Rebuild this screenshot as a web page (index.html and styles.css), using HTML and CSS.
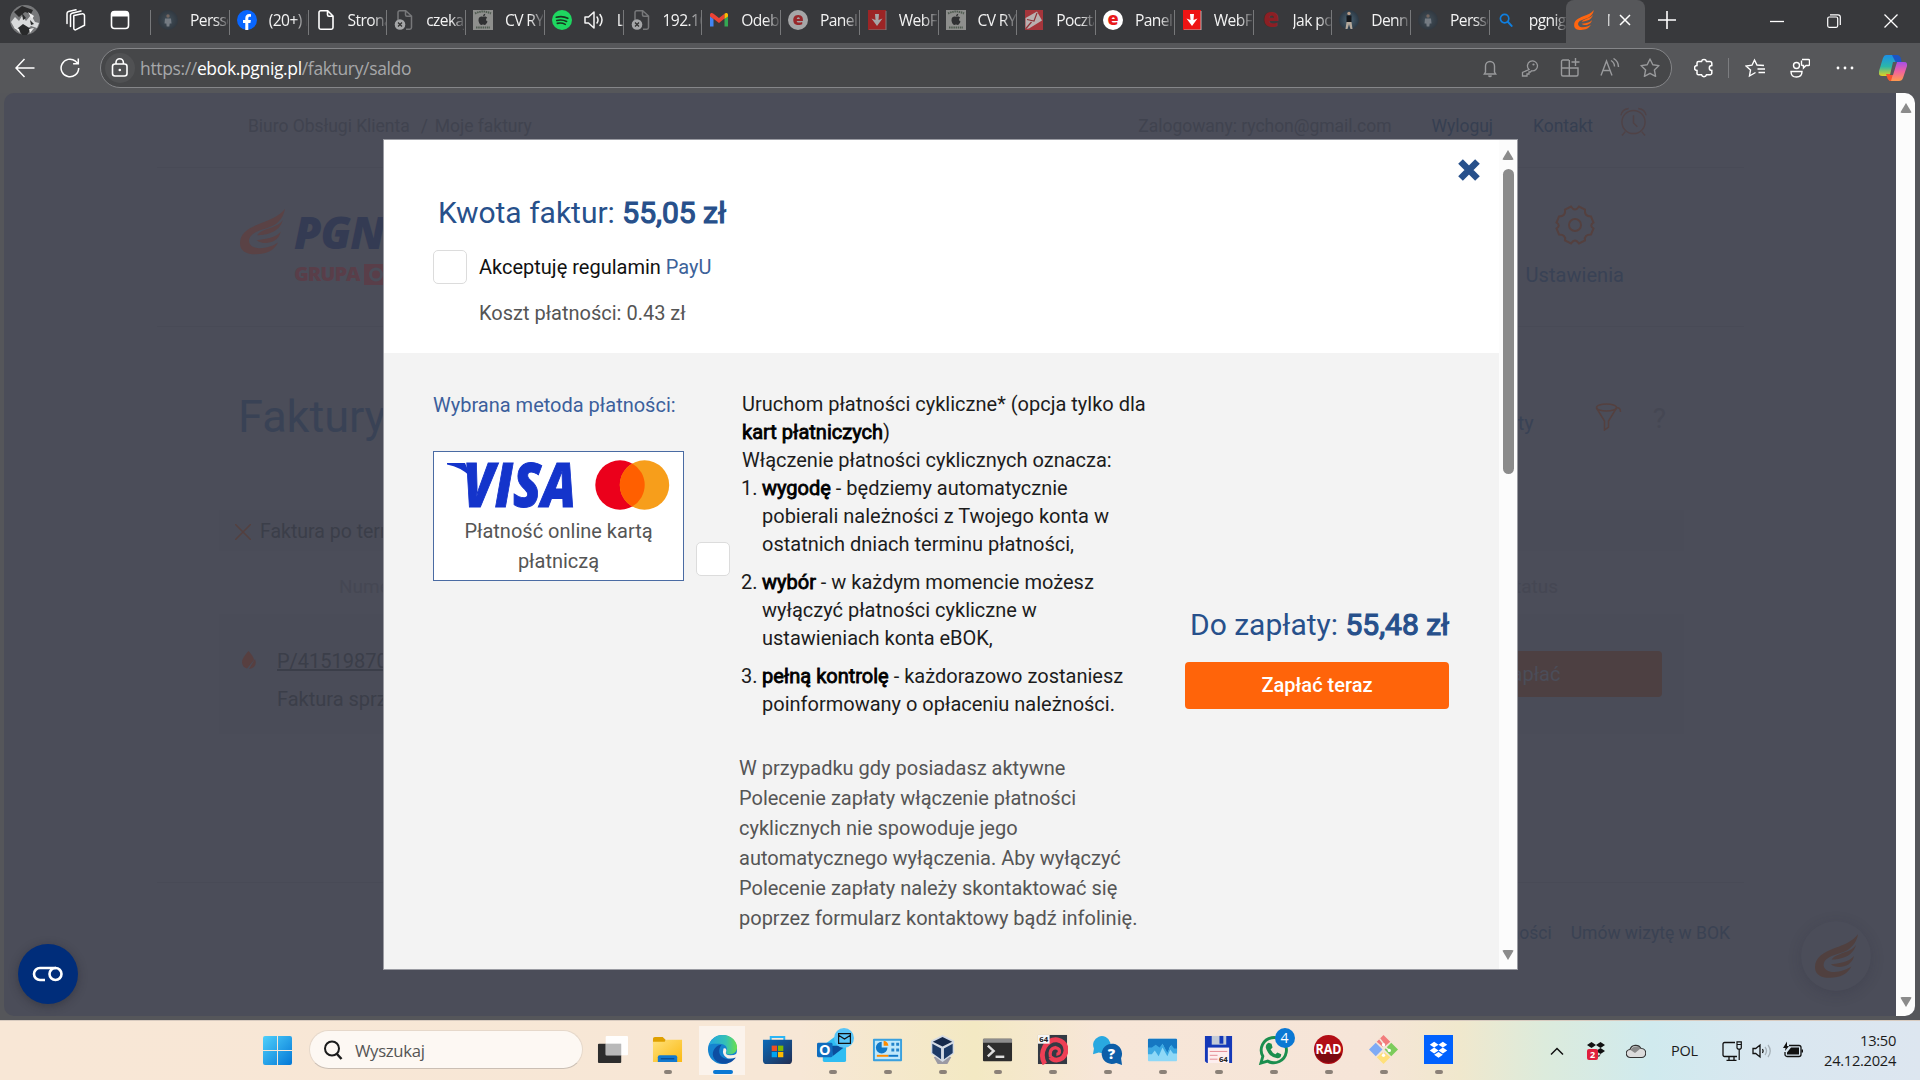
FILE: index.html
```html
<!DOCTYPE html>
<html lang="pl">
<head>
<meta charset="utf-8">
<title>Moje faktury</title>
<link rel="stylesheet" href="styles.css">
</head>
<body>
<svg class="sprite" aria-hidden="true">
  <defs>
    <linearGradient id="gWin" x1="0" y1="0" x2="1" y2="1"><stop offset="0" stop-color="#4fd0fb"/><stop offset="1" stop-color="#0377d6"/></linearGradient>
    <linearGradient id="gFold" x1="0" y1="0" x2="1" y2="1"><stop offset="0" stop-color="#ffe17a"/><stop offset="1" stop-color="#fbb912"/></linearGradient>
    <linearGradient id="gEdge" x1="0" y1="0" x2="1" y2="0"><stop offset="0" stop-color="#23a6e0"/><stop offset=".6" stop-color="#35c1b5"/><stop offset="1" stop-color="#6be04a"/></linearGradient>
    <linearGradient id="gStore" x1="0" y1="0" x2="1" y2="1"><stop offset="0" stop-color="#0a6ab9"/><stop offset="1" stop-color="#222e52"/></linearGradient>
    <linearGradient id="gCo1" x1="0" y1="0" x2="0" y2="1"><stop offset="0" stop-color="#1b8fe8"/><stop offset=".55" stop-color="#2bb7a8"/><stop offset="1" stop-color="#e3d21f"/></linearGradient>
    <linearGradient id="gCo2" x1="0" y1="0" x2="0" y2="1"><stop offset="0" stop-color="#a44fe8"/><stop offset=".5" stop-color="#f0629f"/><stop offset="1" stop-color="#ff9a4d"/></linearGradient>
    <radialGradient id="gDark"><stop offset="0" stop-color="#4c6474"/><stop offset="1" stop-color="#2b3844"/></radialGradient>
  </defs>
  <symbol id="flame" viewBox="0 0 130 132"><path d="M130 0C112 22 92 30 60 42C25 56 0 70 0 100C0 122 18 132 45 132C75 132 98 122 110 98C95 108 70 117 50 114C26 110 20 92 32 78C45 63 75 60 96 49C115 38 127 20 130 0Z"/><path d="M124 32C114 48 98 52 78 59C62 65 54 70 50 77C75 76 114 70 124 32Z"/><path d="M118 66C106 80 90 86 48 91C66 106 110 102 118 66Z"/></symbol>
  <symbol id="doc" viewBox="0 0 20 20"><path d="M4.700.8h7L17 6v11.500a1.700 1.700 0 0 1-1.700 1.700H4.700A1.700 1.700 0 0 1 3 17.500V2.500A1.700 1.700 0 0 1 4.700.8zM11.500 1v3.700A1.500 1.500 0 0 0 13 6.200h4" fill="none" stroke="#fff" stroke-width="1.600"/></symbol>
  <symbol id="docx" viewBox="0 0 20 20"><path d="M4 10V2.500A1.700 1.700 0 0 1 5.700.8h6L17.500 6v11.500a1.700 1.700 0 0 1-1.700 1.700H12M11.500 1v3.700A1.500 1.500 0 0 0 13 6.200h4" fill="none" stroke="#77787a" stroke-width="1.500"/><circle cx="6" cy="14.500" r="5.300" fill="#a5a6a8"/><path d="M4 12.500l4 4M8 12.500l-4 4" stroke="#333" stroke-width="1.300"/></symbol>
  <symbol id="person" viewBox="0 0 20 20"><circle cx="10" cy="10" r="10" fill="url(#gDark)"/><circle cx="10" cy="6" r="1.700" fill="#a58d80"/><path d="M7 8.500h6l.5 5h-1.800l-.4 3h-2.600l-.4-3H6.500z" fill="#a5b1bd"/></symbol>
  <symbol id="person2" viewBox="0 0 20 20"><circle cx="10" cy="10" r="10" fill="url(#gDark)"/><circle cx="10" cy="3.500" r="1.700" fill="#b59a86"/><path d="M7.500 5.500h5v7h-5z" fill="#15181c"/><path d="M7.500 12h5l1 7h-2l-1.500-5-1.500 5h-2z" fill="#b4a99c"/></symbol>
  <symbol id="fb" viewBox="0 0 20 20"><circle cx="10" cy="10" r="10" fill="#0866ff"/><path d="M8.300 20v-7H6v-3h2.300V8.300C8.300 5.600 9.600 4 12.300 4c.8 0 1.300.1 1.700.2v2.500h-1.300c-1.100 0-1.400.6-1.400 1.600V10h2.600l-.5 3h-2.100v7z" fill="#fff"/></symbol>
  <symbol id="apple" viewBox="0 0 20 20"><path d="M0 0h20v20H0z" fill="#8e8f8d"/><path d="M2 3.500Q10-.5 18 3.500M3 17.500h14" stroke="#4f5b50" stroke-width="2" stroke-dasharray="1.500 .7" fill="none"/><path d="M10 7c-1-.8-4.500-.8-4.500 3 0 2.500 1.700 5 3 5 .7 0 .8-.4 1.500-.4s.8.400 1.500.4c1.200 0 2.500-2 3-3.500-2-.8-1.800-3-.3-3.800C13 6.200 11 6.300 10 7zM10 6.500c0-1.500 1-2.700 2.300-2.800 0 1.500-1 2.700-2.300 2.800z" fill="#303133"/></symbol>
  <symbol id="spot" viewBox="0 0 20 20"><circle cx="10" cy="10" r="10" fill="#1ed760"/><path d="M4.300 7.300c4-1.200 8-.8 11.500 1M4.800 10.500c3.500-1 6.700-.6 9.800 1M5.300 13.400c2.800-.7 5.500-.4 8 1" fill="none" stroke="#17351f" stroke-width="1.600" stroke-linecap="round"/></symbol>
  <symbol id="spk" viewBox="0 0 20 20"><path d="M1 7h3.500L10 2v16l-5.500-5H1zM13 7q2 3 0 6M16 4.500q4 5.500 0 11" fill="none" stroke="currentColor" stroke-width="1.500" stroke-linejoin="round" stroke-linecap="round"/></symbol>
  <symbol id="gmail" viewBox="0 0 20 20"><path d="M1 6v10.500h3.500V9z" fill="#4285f4"/><path d="M19 6v10.500h-3.500V9z" fill="#34a853"/><path d="M1 6.500V5c0-2 2-2.500 3.500-1.300L10 8l5.500-4.300V8.500L10 13 4.500 8.700V9z" fill="#ea4335"/><path d="M15.500 9V3.700C17 2.500 19 3 19 5v1.500z" fill="#fbbc04"/></symbol>
  <symbol id="ebadge" viewBox="0 0 20 20"><circle cx="10" cy="10" r="10" fill="#fff"/><text x="10" y="15.300" text-anchor="middle" font-family="Open Sans, sans-serif" font-weight="800" font-size="18" fill="#e8191c">e</text></symbol>
  <symbol id="dl" viewBox="0 0 20 20"><path d="M1 0h18v20H1z" fill="#ee1414"/><path d="M19 1v19H2" fill="none" stroke="#b7b0b0" stroke-width="1"/><path d="M8 4h4l-.5 6 4-1.500L10 16 4.500 8.500l4 1.500z" fill="#fff"/></symbol>
  <symbol id="mail" viewBox="0 0 20 20"><path d="M1 0h18v20H1z" fill="#a5353b"/><path d="M1.500 8L13 1.500l5 9L5 18.500 1.500 19z" fill="#b9b0b0"/><path d="M3 9.500l7 1.500 3-8M1.500 19l6-7" fill="none" stroke="#8d3036" stroke-width="1.200"/></symbol>
  <symbol id="mag" viewBox="0 0 20 20"><circle cx="8" cy="8" r="6" fill="none" stroke="currentColor" stroke-width="2.400"/><path d="M12.500 12.500l5.500 6" stroke="currentColor" stroke-width="2.800" stroke-linecap="round"/></symbol>
</svg>

<header class="tabs">
  <div class="tools">
    <svg class="avatar" viewBox="0 0 30 30"><circle cx="15" cy="15" r="15" fill="#77787a"/><path d="M4 7l8-6 11 4-2 4-6-2-6 5z" fill="#2a2a2b"/><path d="M1 17l4-5 4 4 3-5 4 5 5-6 4 7 4 1-2 5-6-2-5 4-5-3-6 2z" fill="#d9dadb"/><path d="M8 23l5-4 8 5-4 6h-5zM12 8l4 5-3 2zM20 15l4 4-3 1z" fill="#292a2b"/><path d="M18 7l6 4-2 3zM4 22l5 2 1 4zM19 24l5-1-4 5z" fill="#eee"/></svg>
    <svg class="t-work" viewBox="0 0 22 22"><path d="M10 6.500l8-1.800a2 2 0 0 1 2.500 2v9.500l-8.500 4.500a1.500 1.500 0 0 1-2.200-1.300V8a1.700 1.700 0 0 1 .2-1.500zM6.500 17.500V6.200a2 2 0 0 1 1.500-2l9-2.200M3 14.500V4.500a2 2 0 0 1 1.500-2L12 .8" fill="none" stroke="#fff" stroke-width="1.500" stroke-linecap="round"/></svg>
    <svg class="t-side" viewBox="0 0 20 20"><rect x="1.500" y="1.500" width="17" height="17" rx="3" fill="none" stroke="#fff" stroke-width="1.600"/><path d="M1.500 6.500V4a3 3 0 0 1 3-3h11a3 3 0 0 1 3 3v2.500z" fill="#fff"/></svg>
  </div>
  <div class="tab"><svg class="dim"><use href="#person"/></svg><span>Persson</span></div>
  <div class="tab"><svg><use href="#fb"/></svg><span>(20+) F</span></div>
  <div class="tab"><svg><use href="#doc"/></svg><span>Strona</span></div>
  <div class="tab"><svg><use href="#docx"/></svg><span>czekaj</span></div>
  <div class="tab"><svg><use href="#apple"/></svg><span>CV RYS</span></div>
  <div class="tab"><svg><use href="#spot"/></svg><svg class="snd"><use href="#spk"/></svg><span class="after-snd">Li</span></div>
  <div class="tab"><svg><use href="#docx"/></svg><span>192.16</span></div>
  <div class="tab"><svg><use href="#gmail"/></svg><span>Odebr</span></div>
  <div class="tab"><svg class="dim"><use href="#ebadge"/></svg><span>Panel k</span></div>
  <div class="tab"><svg class="dim"><use href="#dl"/></svg><span>WebFT</span></div>
  <div class="tab"><svg><use href="#apple"/></svg><span>CV RYS</span></div>
  <div class="tab"><svg><use href="#mail"/></svg><span>Poczta</span></div>
  <div class="tab"><svg><use href="#ebadge"/></svg><span>Panel k</span></div>
  <div class="tab"><svg><use href="#dl"/></svg><span>WebFT</span></div>
  <div class="tab"><svg viewBox="0 0 20 20"><text x="10" y="17" text-anchor="middle" font-family="Open Sans, sans-serif" font-weight="800" font-size="26" fill="#8c1f24">e</text></svg><span>Jak pob</span></div>
  <div class="tab"><svg><use href="#person2"/></svg><span>Dennis</span></div>
  <div class="tab"><svg class="dim"><use href="#person"/></svg><span>Persson</span></div>
  <div class="tab last"><svg class="bing"><use href="#mag"/></svg><span>pgnig e</span></div>
  <div class="tab active"><svg class="brand"><use href="#flame"/></svg><span>M</span><svg class="x" viewBox="0 0 12 12"><path d="M1 1l10 10M11 1L1 11" stroke="#fff" stroke-width="1.500"/></svg></div>
  <svg class="plus" viewBox="0 0 18 18"><path d="M9 0v18M0 9h18" stroke="#fff" stroke-width="1.600"/></svg>
  <div class="win">
    <svg viewBox="0 0 14 14"><path d="M0 7.500h14" stroke="#fff" stroke-width="1.300"/></svg>
    <svg viewBox="0 0 14 14"><rect x=".7" y="3" width="10" height="10.300" rx="1.500" fill="none" stroke="#fff" stroke-width="1.200"/><path d="M3 .8h8a2.300 2.300 0 0 1 2.300 2.300v8" fill="none" stroke="#fff" stroke-width="1.200"/></svg>
    <svg viewBox="0 0 14 14"><path d="M.5.500l13 13M13.500.5l-13 13" stroke="#fff" stroke-width="1.300"/></svg>
  </div>
</header>

<nav class="bar">
  <svg class="back" viewBox="0 0 20 20"><path d="M19.500 10H1M9.500 1L1 10l8.500 9" fill="none" stroke="#fff" stroke-width="1.500"/></svg>
  <svg class="reload" viewBox="0 0 20 20"><path d="M18.700 10A8.800 8.800 0 1 1 15.500 3.200L18 5.500M18.300.5v5.300h-5.200" fill="none" stroke="#fff" stroke-width="1.500"/></svg>
  <div class="url">
    <span class="lock"><svg viewBox="0 0 18 20"><rect x="1.500" y="6" width="14.500" height="12" rx="2.500" fill="none" stroke="#fff" stroke-width="1.600"/><path d="M5 6V4.500a3.700 3.700 0 0 1 7.400 0V6" fill="none" stroke="#fff" stroke-width="1.600"/><circle cx="8.800" cy="12" r="1.300" fill="#fff"/></svg></span>
    <span class="addr">https://<b>ebok.pgnig.pl</b>/faktury/saldo</span>
    <div class="acts">
      <svg viewBox="0 0 20 20"><path d="M5.500 14V8a4.500 4.500 0 0 1 9 0v6l1.200 2H4.300zM8.500 17.500q1.500 2 3 0" fill="none" stroke="#999a9c" stroke-width="1.400"/></svg>
      <svg viewBox="0 0 20 20"><path d="M9 11.500a5 5 0 1 1 2.500 1.300l-1 1.200H9v2H7v2H2.500v-3.500z" fill="none" stroke="#999a9c" stroke-width="1.300"/><circle cx="13.500" cy="6.500" r="1.100" fill="#999a9c"/></svg>
      <svg viewBox="0 0 20 20"><path d="M9 2H3a1.500 1.500 0 0 0-1.500 1.500v13A1.500 1.500 0 0 0 3 18h13.500a1.500 1.500 0 0 0 1.500-1.500V10H1.500M9.300 2v16M15.500 0v8M11.500 4h8" fill="none" stroke="#999a9c" stroke-width="1.400"/></svg>
      <svg viewBox="0 0 20 20"><path d="M1 17.500L6.500 3 12 17.500M3 12.500h7M11 2.500q3.500 2 3.500 6M13.500.5q5 3 5 8.500" fill="none" stroke="#999a9c" stroke-width="1.400"/></svg>
      <svg viewBox="0 0 20 20"><path d="M10 1l2.800 5.800 6.200.8-4.600 4.400 1.200 6.300L10 15.300l-5.600 3 1.200-6.300L1 7.600l6.200-.8z" fill="none" stroke="#999a9c" stroke-width="1.400" stroke-linejoin="round"/></svg>
    </div>
  </div>
  <div class="ext">
    <svg viewBox="0 0 20 20"><path d="M4.500 3.500h3a2.600 2.600 0 0 1 5 0H16a1.800 1.800 0 0 1 1.800 1.800V7.500a2.500 2.500 0 1 0 0 5V15a1.800 1.800 0 0 1-1.800 1.800h-3.500a2.600 2.600 0 0 1-5 0h-3A1.500 1.500 0 0 1 3 15v-2.500a2.500 2.500 0 0 1 0-5V5a1.500 1.500 0 0 1 1.500-1.500z" fill="none" stroke="#fff" stroke-width="1.500"/></svg>
    <i></i>
    <svg viewBox="0 0 20 20"><path d="M10.500 14.500L4.500 18l1-6L1 8l6-.8L9.500 2 12 7l7 .5M12.500 11H20M13.500 14.500H20" fill="none" stroke="#fff" stroke-width="1.400"/></svg>
    <svg viewBox="0 0 20 20"><circle cx="6.500" cy="7.500" r="3" fill="none" stroke="#fff" stroke-width="1.400"/><path d="M1 13.500h11q0 5.500-5.500 5.500T1 13.500zM12 1.500h6.500a1 1 0 0 1 1 1v4a1 1 0 0 1-1 1h-2.500l-2.500 2.500V7.500h-1a1 1 0 0 1-1-1V2.500" fill="none" stroke="#fff" stroke-width="1.400"/></svg>
    <svg class="more" viewBox="0 0 20 20"><circle cx="3" cy="10" r="1.400" fill="#fff"/><circle cx="10" cy="10" r="1.400" fill="#fff"/><circle cx="17" cy="10" r="1.400" fill="#fff"/></svg>
    <svg class="copilot" viewBox="0 0 28 28"><path d="M7 1h10q3 0 2 4l-4 14q-1 3-4 3H3q-4 0-3-5L4 4q1-3 3-3z" fill="url(#gCo1)"/><path d="M13 1h5q3 0 4 4l.500 3h-6z" fill="#1b55c4"/><path d="M18 8h7q4 0 3 4l-4 12q-1 3-4 3h-8q-3 0-2-3z" fill="url(#gCo2)"/><path d="M7 20h7l-2 7q-3 0-4-4z" fill="#f4542e"/><path d="M14 8h4l-4 13h-3z" fill="#56575a"/></svg>
  </div>
</nav>

<main class="page">
  <div class="site">
    <div class="crumbs">
      <span class="c1">Biuro Obsługi Klienta</span><span class="c2">/</span><span class="c3">Moje faktury</span>
      <span class="logged">Zalogowany: rychon@gmail.com</span><span class="navy out">Wyloguj</span><span class="navy">Kontakt</span>
      <svg class="alarm" viewBox="0 0 28 30"><circle cx="14" cy="15" r="12"/><path d="M14 8v8l4 4M1 8q1-6 8-7M27 8q-1-6-8-7M5.500 25l-3.500 4M22.500 25l3.500 4"/></svg>
    </div>
    <div class="brandrow">
      <svg class="logo"><use href="#flame"/></svg>
      <div class="name"><b>PGNiG</b><span>GRUPA<svg class="orlen" viewBox="0 0 20 21"><path d="M0 0h20v21H0z"/><circle cx="12" cy="10.500" r="5.500"/></svg></span></div>
      <div class="settings"><svg viewBox="0 0 40 40"><path d="M16 1.500q4 6 8 0l6 3q-1 7 6 7l2.500 6q-4.500 3 0 6l-2.500 6q-7 0-6 6l-6 3q-4-6-8 0l-6-3q1-6-6-6l-2.500-6q4.500-3 0-6L4 11.500q7 0 6-7z"/><circle cx="20" cy="20" r="6"/></svg>Ustawienia</div>
    </div>
    <div class="titlerow"><h1>Faktury</h1><span class="ty">Filtry i zwroty</span>
      <svg class="funnel" viewBox="0 0 26 28"><ellipse cx="11" cy="4.500" rx="10" ry="3.500"/><path d="M1 5l8 13v9l4-3v-6l8-13q4-1 4 4"/></svg><span class="q">?</span></div>
    <div class="alert"><svg viewBox="0 0 16 16"><path d="M0 0l16 16M16 0L0 16"/></svg>Faktura po terminie</div>
    <div class="thead"><span>Numer</span><span>Status</span></div>
    <div class="inv">
      <svg class="drop" viewBox="0 0 14 18"><path d="M6.500 0Q12 6 12 9L5 17.500Q0 16 0 11 0 7 6.500 0zM13 8q3 8-6 10z"/></svg>
      <div class="no"><u>P/415198700</u><span>Faktura sprzedaży</span></div>
      <div class="pay">Zapłać</div>
    </div>
    <footer><span>Polityka prywatności</span><span>Umów wizytę w BOK</span></footer>
  </div>
  <div class="vbar"><i class="up"></i><i class="dn"></i></div>
  <div class="chat"><svg><use href="#flame"/></svg></div>
  <div class="cookie"><svg viewBox="0 0 32 16"><path d="M13 14H8A6 6 0 0 1 8 2h16" fill="none" stroke="#fff" stroke-width="2.600"/><circle cx="23.500" cy="8" r="6" fill="none" stroke="#fff" stroke-width="2.600"/></svg></div>

  <section class="modal">
    <div class="content">
      <div class="head">
        <svg class="close" viewBox="0 0 20 20"><path d="M2.300 2.300l15.400 15.400M17.700 2.300L2.300 17.700" stroke="#27508b" stroke-width="6"/></svg>
        <h2>Kwota faktur: <b>55,05 zł</b></h2>
        <label><i class="cb"></i><span>Akceptuję regulamin <a>PayU</a></span></label>
        <p>Koszt płatności: 0.43 zł</p>
      </div>
      <div class="cols">
        <div class="method">
          <h3>Wybrana metoda płatności:</h3>
          <div class="card">
            <svg viewBox="0 0 226 52"><text x="17" y="48" textLength="113" lengthAdjust="spacingAndGlyphs" font-family="Open Sans, sans-serif" font-weight="800" font-style="italic" font-size="62" fill="#1434cb" stroke="#1434cb" stroke-width="1">VISA</text><path d="M1 4h18l6 14Q15 8 1 5.500z" fill="#1434cb"/><circle cx="174" cy="26" r="24.700" fill="#eb001b"/><circle cx="198.500" cy="26" r="24.700" fill="#f79e1b"/><path d="M186.250 4.550a24.700 24.700 0 0 1 0 42.900 24.700 24.700 0 0 1 0-42.900z" fill="#ff5f00"/></svg>
            Płatność online kartą<br>płatniczą
          </div>
        </div>
        <i class="cb second"></i>
        <div class="cyclic">
          <div>Uruchom płatności cykliczne* (opcja tylko dla<br><b>kart płatniczych</b>)<br>Włączenie płatności cyklicznych oznacza:</div>
          <ol>
            <li><b>wygodę</b> - będziemy automatycznie<br>pobierali należności z Twojego konta w<br>ostatnich dniach terminu płatności,</li>
            <li><b>wybór</b> - w każdym momencie możesz<br>wyłączyć płatności cykliczne w<br>ustawieniach konta eBOK,</li>
            <li><b>pełną kontrolę</b> - każdorazowo zostaniesz<br>poinformowany o opłaceniu należności.</li>
          </ol>
          <p>W przypadku gdy posiadasz aktywne<br>Polecenie zapłaty włączenie płatności<br>cyklicznych nie spowoduje jego<br>automatycznego wyłączenia. Aby wyłączyć<br>Polecenie zapłaty należy skontaktować się<br>poprzez formularz kontaktowy bądź infolinię.</p>
        </div>
        <div class="total"><h2>Do zapłaty: <b>55,48 zł</b></h2><button>Zapłać teraz</button></div>
      </div>
    </div>
    <div class="mbar"><i class="up"></i><i class="thumb"></i><i class="dn"></i></div>
  </section>
</main>

<footer class="task">
  <svg class="start" viewBox="0 0 29 29"><path d="M0 2a2 2 0 0 1 2-2h12v14H0zM15 0h12a2 2 0 0 1 2 2v12H15zM0 15h14v14H2a2 2 0 0 1-2-2zM15 15h14v12a2 2 0 0 1-2 2H15z" fill="url(#gWin)"/></svg>
  <div class="search"><svg viewBox="0 0 20 20"><circle cx="9" cy="8.500" r="7" fill="none" stroke="#1b1b1b" stroke-width="2"/><path d="M13.500 13.500l5 5.500" stroke="#1b1b1b" stroke-width="2.500"/></svg>Wyszukaj</div>
  <div class="apps">
    <div class="app nodot"><svg viewBox="0 0 32 32"><rect x="1" y="10" width="24" height="20" rx="1" fill="#2d2d2d"/><rect x="9" y="2" width="23" height="20" rx="1" fill="#fff" opacity=".95"/><path d="M9 10h16v12H9z" fill="#b9b9b9"/></svg></div>
    <div class="app"><svg viewBox="0 0 32 32"><path d="M1 5q0-2 2-2h8l3 3v5H1z" fill="#dfa000"/><path d="M1 8h12l2-2h16v23H1z" fill="url(#gFold)"/><path d="M6 29v-5q0-2 2-2h16q2 0 2 2v5z" fill="#1279cf"/><path d="M9 25.500h14" stroke="#0b4f96" stroke-width="1.500"/></svg></div>
    <div class="app on"><svg viewBox="0 0 32 32"><circle cx="16" cy="16" r="15" fill="#1583cf"/><path d="M2 11C5 4 10 1 16 1c9 0 15 6 15 13 0 5-4 7-8 7-3 0-4-1-3-3 2-5-2-8-7-8-5 0-9 0-11 1z" fill="url(#gEdge)"/><path d="M30 24c-4 6-11 8-17 6-7-3-9-10-5-15 2-3 5-4 7-4-4 5-3 12 3 14 4 2 8 1 12-1z" fill="#0d4ea3"/><path d="M20 17q-2 5 4 5 4 0 7-2 1 2-1 4-5 2-9 1-6-3-4-10 3-1 3 2z" fill="#faf1ea"/></svg></div>
    <div class="app nodot"><svg viewBox="0 0 32 32"><path d="M9 9V3h14v6" fill="none" stroke="#2cb5f5" stroke-width="2"/><path d="M1 6h30v21q0 4-4 4H5q-4 0-4-4z" fill="url(#gStore)"/><path d="M10 12h5.500v5.500H10z" fill="#f25022"/><path d="M16.500 12H22v5.500h-5.500z" fill="#7fba00"/><path d="M10 18.500h5.500V24H10z" fill="#00a4ef"/><path d="M16.500 18.500H22V24h-5.500z" fill="#ffb900"/></svg></div>
    <div class="app"><svg viewBox="0 0 32 32"><path d="M6 12L18 3l12 9v15q0 2-2 2H8q-2 0-2-2z" fill="#2fbdf2"/><path d="M15 12l15 0-14 11z" fill="#0b4e9c"/><rect x="0" y="9" width="16" height="15" rx="1.500" fill="#0f6cbd"/><text x="8" y="22" text-anchor="middle" font-family="Open Sans, sans-serif" font-weight="700" font-size="15" fill="#fff">O</text></svg><em class="env"><svg viewBox="0 0 12 10"><path d="M.5.500h11v9H.5zM.5 2L6 5.500 11.500 2" fill="none" stroke="#111" stroke-width="1.200"/></svg></em></div>
    <div class="app"><svg viewBox="0 0 32 32"><rect x="1" y="5" width="30" height="23" rx="1" fill="#3aa0de"/><rect x="3" y="7" width="26" height="19" fill="#bfe8fb"/><path d="M10 8a6 6 0 1 0 6 6h-6z" fill="#0f78c8"/><path d="M12 7a6 6 0 0 1 5 5h-5z" fill="#ff8c00"/><path d="M20 9h3v3h-3zM25 9h3v3h-3zM20 15h3v3h-3zM25 15h3v3h-3z" fill="#2283ca"/><path d="M5 22.500h12" stroke="#ff8c00" stroke-width="2"/><path d="M17 22.500h10" stroke="#0f78c8" stroke-width="2"/></svg></div>
    <div class="app"><svg viewBox="0 0 32 32"><path d="M7 24l9-4 9 4-4 7H11z" fill="#9b9aa3"/><path d="M16 1l12 6v13l-12 9-12-9V7z" fill="#d3dae4"/><path d="M16 3l10 5-10 5L6 8z" fill="#16294b"/><path d="M5.500 10l9 5v11l-9-6.500zM26.500 10l-9 5v11l9-6.500z" fill="#1d3a66"/></svg></div>
    <div class="app"><svg viewBox="0 0 32 32"><rect x="1" y="5" width="30" height="23" rx="1" fill="#2d2d2d"/><path d="M1 9V6q0-1 1-1h28q1 0 1 1v3z" fill="#8d8d8d"/><path d="M6 12l6 5.500L6 23" fill="none" stroke="#ddd" stroke-width="2.500"/><path d="M14 23.500h9" stroke="#ddd" stroke-width="2.500"/></svg></div>
    <div class="app"><svg viewBox="0 0 32 32"><rect x="1" y="1" width="30" height="30" fill="#333a44"/><path d="M8 31q-5-9 0-18Q13 5 21 6q9 2 9 11-1 9-10 10-4 0-6-3" fill="none" stroke="#ee3f55" stroke-width="5"/><path d="M14 24q-2-9 5-10 5 1 4 5-1 2-3 2" fill="none" stroke="#ee3f55" stroke-width="3.500"/><path d="M1 1h12v9H1z" fill="#f5f5f5"/><text x="7" y="8.500" text-anchor="middle" font-family="Open Sans, sans-serif" font-weight="700" font-size="8" fill="#222">64</text></svg></div>
    <div class="app"><svg viewBox="0 0 32 32"><path d="M1 21l1-6A9 9 0 1 1 12 20l-5-1z" fill="#29a8e0"/><path d="M31 32l-1-7a10.500 10.500 0 1 0-5 5z" fill="#0d5ea8"/><text x="20" y="26" text-anchor="middle" font-family="Open Sans, sans-serif" font-weight="800" font-size="15" fill="#fff">?</text></svg></div>
    <div class="app"><svg viewBox="0 0 32 32"><rect x="1" y="5" width="30" height="23" rx="1" fill="#8ed8f7"/><path d="M1 6q0-1 1-1h28q1 0 1 1v12h-3l-4-6-3 9-5-11-4 11-4-6-3 4H1z" fill="#1577c2"/><path d="M1 14h4l4-3 4 3 3-4 5 9 4-8 3 4h3v5h-4l-3-4-3 7-5-9-4 9-4-6-3 4H1z" fill="#3ca8e2"/></svg></div>
    <div class="app"><svg viewBox="0 0 32 32"><path d="M2 2h28v28H4l-2-2z" fill="#1538b8"/><path d="M9 2h15v9H9z" fill="#c3cad6"/><path d="M17 2h4v8h-4z" fill="#1538b8"/><path d="M5 14h22v16H5z" fill="#fdeeee"/><path d="M7 18h18M7 22h8M7 26h8" stroke="#e48a94" stroke-width="1"/><text x="21" y="29" text-anchor="middle" font-family="Open Sans, sans-serif" font-weight="700" font-size="8" fill="#222">64</text></svg></div>
    <div class="app"><svg viewBox="0 0 32 32"><path d="M3 30l2-7A13 13 0 1 1 10 28z" fill="#f6e6da" stroke="#1b8e4e" stroke-width="3"/><path d="M11 9l3 1 1 4-2 2q2 4 5 5l2-2 4 2q0 4-4 4-9-1-12-11 0-4 3-5z" fill="#1b8e4e"/></svg><em>4</em></div>
    <div class="app"><svg viewBox="0 0 32 32"><circle cx="16" cy="16" r="15" fill="#b20d15"/><path d="M2 20a15 15 0 0 0 28 0z" fill="#7c0a10"/><text x="16" y="21" text-anchor="middle" textLength="27" lengthAdjust="spacingAndGlyphs" font-family="Open Sans, sans-serif" font-weight="700" font-size="14" fill="#fff">RAD</text></svg></div>
    <div class="app"><svg viewBox="0 0 32 32"><path d="M16 1l7 7-7 6-7-6z" fill="#f27c7c"/><path d="M24 9l7 7-7 7-7-7z" fill="#7ccc5c"/><path d="M8 9l7 7-7 7-7-7z" fill="#7fabf5"/><path d="M16 18l7 6-7 7-7-7z" fill="#ffe07a"/><path d="M12 5l4 5v13M16 12l6 5" fill="none" stroke="#f4e7da" stroke-width="1.600"/><circle cx="16" cy="11" r="1.700" fill="#fff"/><circle cx="16" cy="22" r="1.700" fill="#fff"/><circle cx="22" cy="17" r="1.700" fill="#fff"/></svg></div>
    <div class="app"><svg viewBox="0 0 32 32"><path d="M1 1h30v30H1z" fill="#0061fe"/><path d="M11.500 8l4.500 3-4.500 3L7 11zM20.500 8l4.500 3-4.500 3-4.500-3zM11.500 14l4.500 3-4.500 3L7 17zM20.500 14l4.500 3-4.500 3-4.500-3zM16 18.500l4.500 3L16 24.500l-4.500-3z" fill="#fff"/></svg></div>
  </div>
  <div class="tray">
    <svg class="s14" viewBox="0 0 14 14"><path d="M1 10.500l6-6 6 6" fill="none" stroke="#111" stroke-width="1.500"/></svg>
    <svg class="s20" viewBox="0 0 20 20"><path d="M5.500 1l4.500 3-4.500 3L1 4zM14.500 1L19 4l-4.500 3L10 4zM14.500 7l4.500 3-4.500 3-4.500-3z" fill="#111"/><path d="M11 15l4-2-2 3z" fill="#444"/><rect x="1" y="8" width="11" height="11" rx="2" fill="#e01f3d"/><text x="6.500" y="16.700" text-anchor="middle" font-family="Open Sans, sans-serif" font-weight="700" font-size="9" fill="#fff">2</text></svg>
    <svg class="s20" viewBox="0 0 20 20"><path d="M4.500 16.500a4 4 0 0 1-.5-8 6 6 0 0 1 11-1 4.500 4.500 0 0 1 .5 9z" fill="#dcdcdc" stroke="#333" stroke-width="1.200"/><path d="M4.500 9a6 6 0 0 1 10-1.500L9 12z" fill="#8a8a8a"/></svg>
    <span class="lang">POL</span>
    <svg class="s20" viewBox="0 0 20 20"><path d="M13 1.500H2.500A1.500 1.500 0 0 0 1 3v11a1.500 1.500 0 0 0 1.500 1.500H15M7 16v3M12 16v3M4.500 19.300h10" fill="none" stroke="#111" stroke-width="1.300"/><path d="M15 .8h4.300V7l-1 1.200h-2.300L15 7zM15 3.500h4M17.200 8v11" fill="none" stroke="#111" stroke-width="1.200"/></svg>
    <svg class="s20 vol" viewBox="0 0 20 20"><path d="M1 7.500h2.700L8 4v12l-4.300-3.500H1zM10.500 8q1.300 2 0 4" fill="none" stroke="#111" stroke-width="1.300"/><path d="M13 6q3 4 0 8M16 4q4.500 6 0 12" fill="none" stroke="#a7b1b8" stroke-width="1.300"/></svg>
    <svg class="s20" viewBox="0 0 20 20"><path d="M6 4.500h10a2 2 0 0 1 2 2v7a2 2 0 0 1-2 2H4a2 2 0 0 1-2-2V11" fill="none" stroke="#111" stroke-width="1.300"/><path d="M8 6.500h8v7H4v-2zM18.500 8.500h1.500v3h-1.500zM4 .5L0 7h2.500L2 10l4-5H4z" fill="#111"/></svg>
    <div class="clock">13:50<br>24.12.2024</div>
  </div>
</footer>
</body>
</html>
```
FILE: styles.css
```css
* { box-sizing: border-box; }
body { margin: 0; width: 1920px; height: 1080px; overflow: hidden; display: flex; flex-direction: column; background: #55565a; font-family: "Open Sans", sans-serif; }
h1, h2, h3, p, ol { margin: 0; padding: 0; font-weight: 400; }
svg { display: block; flex: none; }
.sprite { position: absolute; width: 0; height: 0; }

/* tab strip */
.tabs { height: 43px; flex: none; display: flex; background: #38393c; color: #f3f3f3; font-size: 15.600px; }
.tools { width: 150px; flex: none; display: flex; align-items: center; padding-left: 10px; height: 40px; }
.avatar { width: 30px; height: 30px; }
.t-work { width: 22px; height: 22px; margin-left: 24px; }
.t-side { width: 20px; height: 20px; margin-left: 24px; }
.tab { width: 78.750px; flex: none; display: flex; align-items: center; height: 43px; padding: 0 0 3px 8px; overflow: hidden; background: linear-gradient(#77787a, #77787a) 0 10px / 1px 25px no-repeat; }
.tab svg { width: 20px; height: 20px; }
.tab span { margin-left: 12px; width: 38px; overflow: hidden; white-space: nowrap; letter-spacing: -.6px; line-height: 24px; -webkit-mask-image: linear-gradient(90deg, #000 65%, rgba(0,0,0,.15)); mask-image: linear-gradient(90deg, #000 65%, rgba(0,0,0,.15)); }
.tab .dim { opacity: .55; }
.tab .snd { margin-left: 12px; }
.tab .after-snd { width: 7px; margin-left: 13px; }
.tab .bing { width: 14px; height: 14px; margin: 0 4px 0 2px; color: #0f7fe0; }
.tab.last { width: 77px; }
.tab.active { background: #56575a; border-radius: 8px 8px 0 0; width: 79px; }
.tab.active .brand { fill: #ff650f; }
.tab.active span { width: 3px; margin-left: 13px; }
.tab.active .x { width: 12px; height: 12px; margin-left: 9px; }
.plus { width: 18px; height: 18px; margin: 11px 0 0 13px; }
.win { margin: 14px 22px 0 auto; display: flex; gap: 43px; }
.win svg { width: 14px; height: 14px; }

/* address bar */
.bar { height: 50px; flex: none; display: flex; align-items: center; background: #56575a; }
.back { width: 20px; height: 20px; margin-left: 15px; }
.reload { width: 20px; height: 20px; margin-left: 25px; }
.url { width: 1572px; height: 40px; margin-left: 20px; border: 1.500px solid #858689; border-radius: 20px; background: #464749; display: flex; align-items: center; padding-left: 4px; }
.lock { width: 30px; height: 30px; border-radius: 15px; background: #505153; display: flex; align-items: center; justify-content: center; }
.lock svg { width: 18px; height: 20px; }
.addr { margin-left: 5px; font-size: 17.500px; color: #a6a8aa; letter-spacing: -.350px; line-height: 26px; }
.addr b { color: #fff; font-weight: 400; }
.acts { margin-left: auto; margin-right: 11px; display: flex; gap: 20px; }
.acts svg { width: 20px; height: 20px; }
.ext { display: flex; align-items: center; margin-left: 22px; }
.ext svg { width: 20px; height: 20px; }
.ext i { width: 1px; height: 20px; background: #7c7d80; margin: 0 16px 0 14px; }
.ext i + svg { margin-right: 25px; }
.ext i + svg + svg { margin-right: 25px; }
.ext .copilot { width: 28px; height: 28px; margin-left: 24px; }

/* dimmed account page */
.page { height: 923px; margin: 0 5px 0 4px; flex: none; position: relative; background: #4b4d59; border-radius: 10px; overflow: hidden; font-family: Roboto, sans-serif; font-size: 18px; color: #40434f; }
.site { width: 1587px; margin-left: 153px; }
.site svg { fill: none; stroke: #54403f; stroke-width: 1.500; }
.navy { color: #363f51; }
.crumbs { height: 75px; padding: 0 0 9px 91px; border-bottom: 1px solid #484a56; display: flex; align-items: center; font-size: 17.500px; letter-spacing: -.03px; }
.c2 { margin: 0 7px 0 11px; }
.logged { margin-left: auto; }
.out { margin: 0 40px; }
.crumbs .alarm { width: 27px; height: 30px; margin: 0 97px 8px 27px; stroke: #4f4246; }
.brandrow { height: 159px; border-bottom: 1px solid #484a56; display: flex; padding: 38px 120px 0 83px; }
.site .logo { width: 45px; height: 47px; fill: #5a4245; stroke: none; margin-top: 2px; }
.name { margin-left: 9px; display: flex; flex-direction: column; width: 90px; font-family: "Open Sans", sans-serif; }
.name b { font-style: italic; font-weight: 800; font-size: 44px; line-height: 44px; color: #343b53; margin-top: 4px; letter-spacing: -1px; }
.name span { display: flex; align-items: center; font-weight: 800; font-size: 20px; line-height: 24px; color: #593e49; margin-top: 8px; letter-spacing: -1px; }
.name .orlen { width: 20px; height: 21px; margin-left: 4px; fill: #593e49; stroke: none; }
.name .orlen circle { stroke: #4b4d59; stroke-width: 3; }
.settings { margin-left: auto; font-size: 20px; color: #394255; line-height: 24px; display: flex; flex-direction: column; align-items: center; gap: 18px; letter-spacing: .05px; }
.settings svg { width: 40px; height: 40px; stroke-width: 2; margin-top: -1px; }
.titlerow { height: 183px; display: flex; padding: 60px 77px 0 81px; color: #394255; }
h1 { font-size: 45px; line-height: 60px; }
.ty { margin-left: auto; font-size: 20px; padding-top: 24px; }
.funnel { width: 27px; height: 28px; margin: 16px 0 0 61px; }
.q { font-size: 28px; margin: 15px 1px 0 31px; color: #454753; }
.alert { height: 41px; margin-left: 62px; width: 1465px; background: #4a4c58; display: flex; align-items: center; padding: 2px 0 0 16px; font-size: 19.500px; color: #3b3e49; }
.alert svg { width: 16px; height: 16px; margin-right: 9px; }
.thead { height: 63px; display: flex; justify-content: space-between; padding: 24px 186px 0 182px; color: #454753; font-size: 19px; line-height: 24px; }
.inv { height: 120px; margin-left: 62px; width: 1465px; background: #4a4c58; display: flex; padding-left: 23px; font-size: 20px; }
.inv .drop { width: 14px; height: 18px; margin-top: 37px; fill: #573f40; stroke: none; }
.no { margin-left: 21px; color: #3b3e49; display: flex; flex-direction: column; line-height: 38px; padding-top: 28px; }
.pay { margin: 37px 22px 0 auto; width: 264px; height: 46px; background: #4d4042; border-radius: 4px; text-align: center; line-height: 46px; color: #4b4d59; }
.site footer { margin-top: 148px; border-top: 1px solid #484a56; display: flex; justify-content: flex-end; gap: 19px; padding: 38px 14px 0 0; color: #3a4253; line-height: 24px; font-size: 17.500px; }
.vbar { position: absolute; top: 0; right: 0; width: 19px; height: 923px; background: #fcfcfc; display: flex; flex-direction: column; align-items: center; justify-content: space-between; padding: 10px 0 9px; }
.up, .dn { border: 6px solid transparent; border-top: 0; border-bottom: 10px solid #8b8b8b; border-radius: 2px; width: 0; }
.dn { border-bottom: 0; border-top: 10px solid #8b8b8b; }
.chat { position: absolute; left: 1797px; top: 828px; width: 70px; height: 70px; border-radius: 35px; background: #4b4d59; box-shadow: 0 3px 14px rgba(40,42,55,.2); display: flex; align-items: center; justify-content: center; }
.chat svg { width: 43px; height: 44px; fill: #50403f; }
.cookie { position: absolute; left: 14px; top: 851px; width: 60px; height: 60px; border-radius: 30px; background: #002d7a; box-shadow: 0 2px 10px rgba(30,30,40,.4); display: flex; align-items: center; justify-content: center; }
.cookie svg { width: 32px; height: 16px; }

/* payment dialog */
.modal { position: absolute; left: 379px; top: 46px; width: 1135px; height: 831px; border: 1px solid #9a9ba2; display: flex; background: #f3f3f3; font-size: 20px; }
.content { width: 1115px; flex: none; display: flex; flex-direction: column; }
.head { position: relative; background: #fff; height: 213px; flex: none; padding: 53px 0 0 49px; }
.close { position: absolute; right: 19px; top: 19px; width: 22px; height: 22px; }
.modal h2 { font-size: 30px; line-height: 40px; color: #27508b; padding-left: 5px; white-space: nowrap; }
.modal h2 b { font-weight: 400; -webkit-text-stroke: 1.200px #27508b; }
.head label { display: flex; align-items: center; margin-top: 17px; height: 34px; color: #111; }
.head label span { margin-left: 12px; }
.head a { color: #3c6299; }
.cb { width: 34px; height: 34px; border: 1.500px solid #dcdcdc; border-radius: 5px; background: #fff; flex: none; }
.head p { margin: 17px 0 0 46px; line-height: 24px; color: #555; }
.cols { display: flex; flex: 1; padding-left: 49px; }
.method { width: 251px; padding-top: 40px; }
.method h3 { font-size: 20px; line-height: 24px; color: #3c5f9c; white-space: nowrap; }
.card { width: 251px; height: 130px; margin-top: 34px; border: 1.500px solid #4a6ba3; background: #fff; text-align: center; color: #555; line-height: 30px; padding-top: 7px; }
.card svg { width: 226px; height: 52px; margin: 0 0 5px 12px; }
.second { margin: 189px 0 0 12px; }
.cyclic { margin-left: 12px; width: 440px; padding-top: 37px; line-height: 28px; color: #1c1c1c; white-space: nowrap; }
.cyclic b { font-weight: 400; color: #000; -webkit-text-stroke: .8px #000; }
.cyclic ol { padding-left: 20px; list-style: none; counter-reset: n; }
.cyclic li { margin-bottom: 10px; counter-increment: n; }
.cyclic li::before { content: counter(n) "."; display: inline-block; width: 21px; margin-left: -21px; }
.cyclic p { margin: 35px 0 0 -3px; line-height: 30px; color: #555; }
.total { padding-top: 252px; margin-left: 3px; width: 264px; }
.total button { display: block; margin-top: 17px; width: 264px; height: 47px; border: 0; padding: 0 0 2px; border-radius: 4px; background: #ff640a; color: #fff; font: 500 20px Roboto, sans-serif; }
.mbar { width: 18px; background: #fcfcfc; display: flex; flex-direction: column; align-items: center; padding: 10px 0 9px; }
.thumb { width: 11px; height: 305px; border-radius: 6px; background: #8b8b8b; margin-top: 9px; }
.mbar .dn { margin-top: auto; }

/* taskbar */
.task { height: 60px; margin-top: 4px; flex: none; border-top: 1px solid #d8cbc0; display: flex; position: relative; background: linear-gradient(90deg, #f8e7d6 0, #f7e7d6 800px, #f3e9c3 975px, #f7e6d8 1100px, #f6e5d8 1370px, #f0e8cd 1460px, #dcebdc 1545px, #d0eaee 1650px, #d9e7f0 1760px, #dde6f0 1920px); color: #1b1b1b; }
.start { width: 29px; height: 29px; margin: 15px 0 0 263px; }
.search { width: 274px; height: 39px; margin: 9px 0 0 17px; border-radius: 20px; background: #fdf8f3; border: 1px solid #e6d8ca; border-bottom-color: #cbbfb4; display: flex; align-items: center; padding: 1px 0 0 13px; font-size: 16.700px; color: #555; letter-spacing: -.3px; }
.search svg { width: 20px; height: 20px; margin-right: 12px; }
.apps { display: flex; margin: 5px 0 0 2px; }
.app { width: 55.050px; height: 49px; display: flex; justify-content: center; padding-top: 8px; position: relative; background: none; }
.app > svg { width: 31px; height: 31px; }
.app::after { content: ""; position: absolute; left: 24px; top: 44px; width: 8px; height: 4px; border-radius: 2px; background: #8b8178; }
.nodot::after { display: none; }
.on { background: linear-gradient(#fbf3ec, #fbf3ec) 4px 0 / 46px 49px no-repeat; }
.on::after { left: 18px; width: 20px; background: #0a78d4; }
.app em { position: absolute; right: 6px; top: 2px; width: 20px; height: 20px; border-radius: 10px; background: #0a78d4; color: #fff; font: 400 14px/20px "Open Sans", sans-serif; text-align: center; }
.app .env { background: #58c4f7; display: flex; align-items: center; justify-content: center; }
.app .env svg { width: 13px; height: 11px; }
.tray { margin-left: auto; display: flex; align-items: center; padding-right: 24px; height: 59px; }
.s14 { width: 14px; height: 14px; }
.s20 { width: 20px; height: 20px; }
.s14 + .s20 { margin: 0 20px 0 22px; }
.lang { font-size: 14.500px; margin: 0 24px 0 25px; letter-spacing: -.3px; width: 27px; }
.vol { margin: 0 11px 0 10px; }
.clock { font-size: 14.700px; line-height: 20px; text-align: right; margin-left: 20px; letter-spacing: -.3px; width: 73px; white-space: nowrap; padding-bottom: 2px; }
```
